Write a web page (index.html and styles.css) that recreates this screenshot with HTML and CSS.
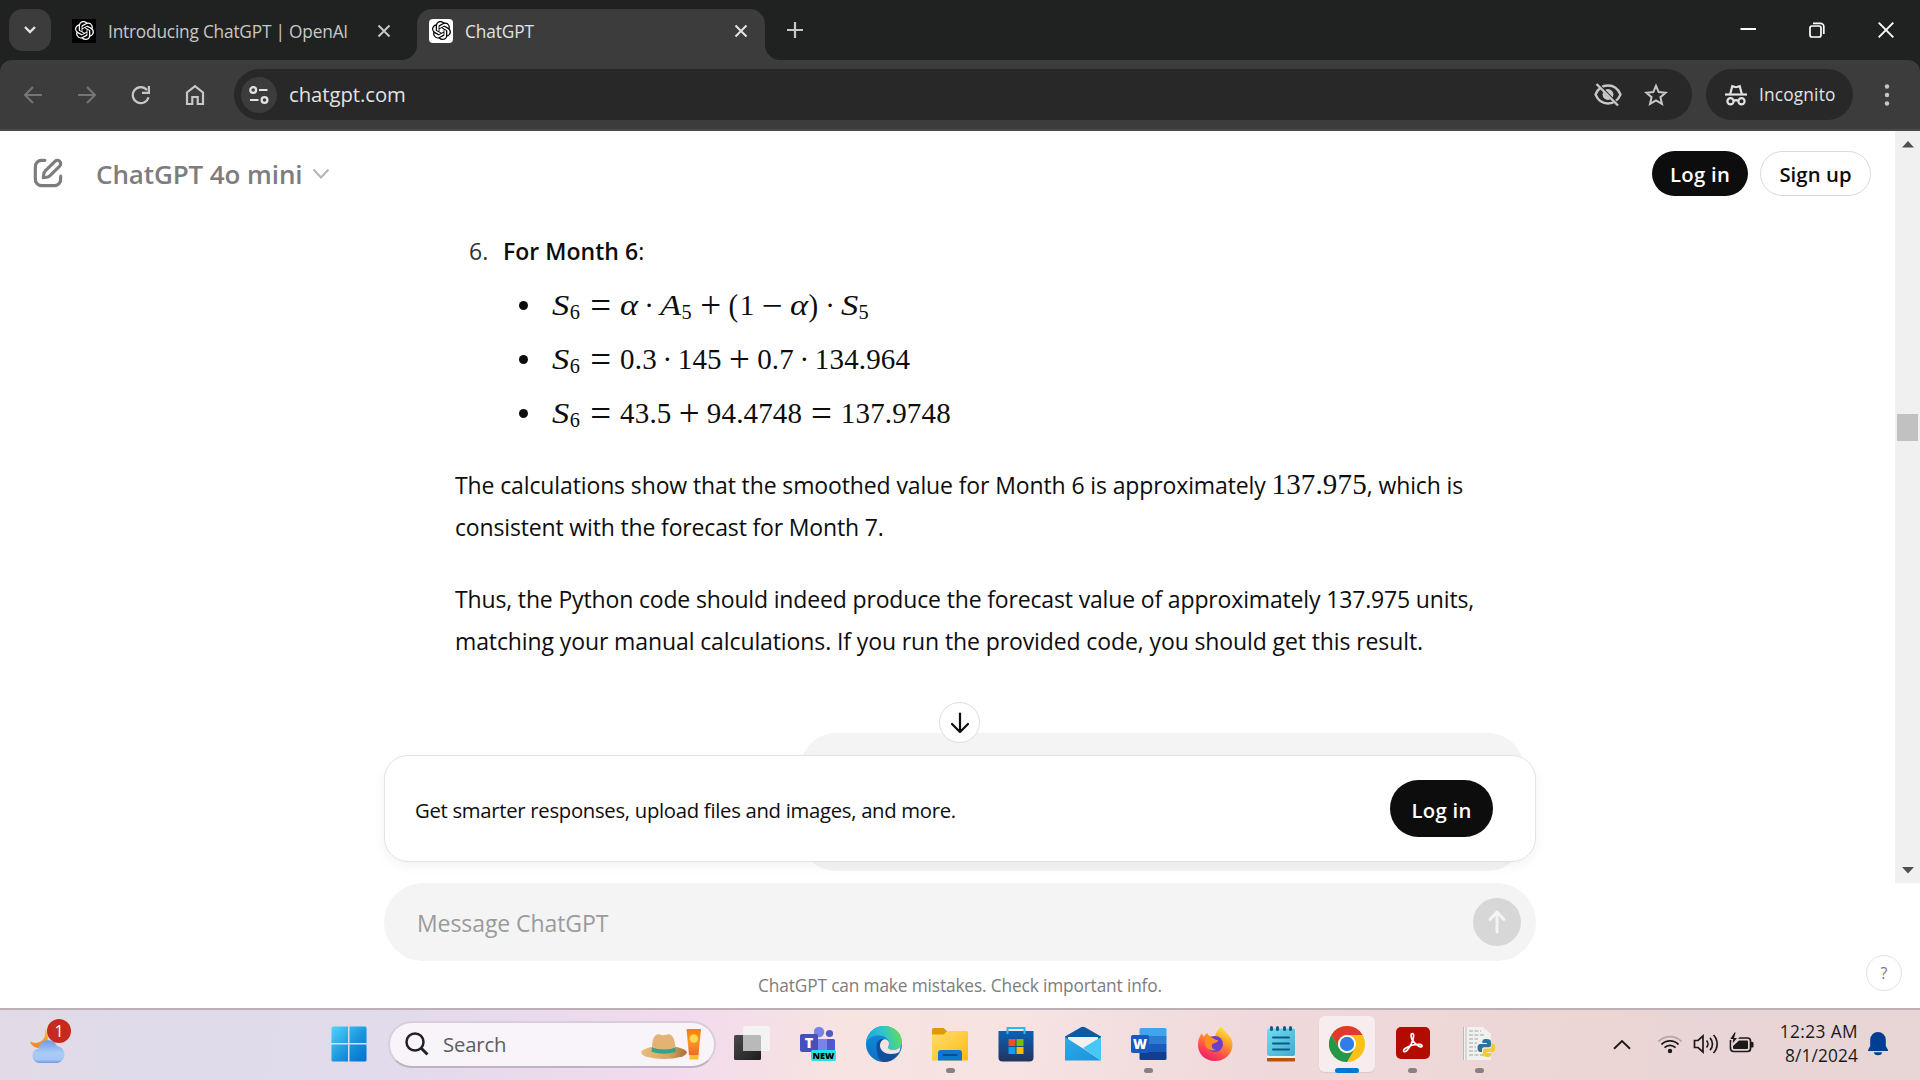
FILE: index.html
```html
<!DOCTYPE html>
<html lang="en">
<head>
<meta charset="utf-8">
<title>ChatGPT</title>
<link rel="stylesheet" href="styles.css">
</head>
<body>
<svg class="defs" width="0" height="0" aria-hidden="true">
  <defs>
    <symbol id="knot" viewBox="0 0 24 24"><path d="M22.2819 9.8211a5.9847 5.9847 0 0 0-.5157-4.9108 6.0462 6.0462 0 0 0-6.5098-2.9A6.0651 6.0651 0 0 0 4.9807 4.1818a5.9847 5.9847 0 0 0-3.9977 2.9 6.0462 6.0462 0 0 0 .7427 7.0966 5.98 5.98 0 0 0 .511 4.9107 6.051 6.051 0 0 0 6.5146 2.9001A5.9847 5.9847 0 0 0 13.2599 24a6.0557 6.0557 0 0 0 5.7718-4.2058 5.9894 5.9894 0 0 0 3.9977-2.9001 6.0557 6.0557 0 0 0-.7475-7.0729zm-9.022 12.6081a4.4755 4.4755 0 0 1-2.8764-1.0408l.1419-.0804 4.7783-2.7582a.7948.7948 0 0 0 .3927-.6813v-6.7369l2.02 1.1686a.071.071 0 0 1 .038.052v5.5826a4.504 4.504 0 0 1-4.4945 4.4944zm-9.6607-4.1254a4.4708 4.4708 0 0 1-.5346-3.0137l.142.0852 4.783 2.7582a.7712.7712 0 0 0 .7806 0l5.8428-3.3685v2.3324a.0804.0804 0 0 1-.0332.0615L9.74 19.9502a4.4992 4.4992 0 0 1-6.1408-1.6464zM2.3408 7.8956a4.485 4.485 0 0 1 2.3655-1.9728V11.6a.7664.7664 0 0 0 .3879.6765l5.8144 3.3543-2.0201 1.1685a.0757.0757 0 0 1-.071 0l-4.8303-2.7865A4.504 4.504 0 0 1 2.3408 7.872zm16.5963 3.8558L13.1038 8.364 15.1192 7.2a.0757.0757 0 0 1 .071 0l4.8303 2.7913a4.4944 4.4944 0 0 1-.6765 8.1042v-5.6772a.79.79 0 0 0-.407-.667zm2.0107-3.0231l-.142-.0852-4.7735-2.7818a.7759.7759 0 0 0-.7854 0L9.409 9.2297V6.8974a.0662.0662 0 0 1 .0284-.0615l4.8303-2.7866a4.4992 4.4992 0 0 1 6.6802 4.66zM8.3065 12.863l-2.02-1.1638a.0804.0804 0 0 1-.038-.0567V6.0742a4.4992 4.4992 0 0 1 7.3757-3.4537l-.142.0805L8.704 5.459a.7948.7948 0 0 0-.3927.6813zm1.0976-2.3654l2.602-1.4998 2.6069 1.4998v2.9994l-2.5974 1.4997-2.6067-1.4997Z"/></symbol>
    <linearGradient id="gWin" x1="0" y1="0" x2="1" y2="1"><stop offset="0" stop-color="#4fd5ff"/><stop offset=".55" stop-color="#1a94dd"/><stop offset="1" stop-color="#0070cc"/></linearGradient>
    <linearGradient id="gMoon" x1="0" y1="0" x2="0" y2="1"><stop offset="0" stop-color="#fbc53a"/><stop offset="1" stop-color="#ec8420"/></linearGradient>
    <linearGradient id="gCloud" x1="0" y1="0" x2="0" y2="1"><stop offset="0" stop-color="#6d9de6"/><stop offset=".55" stop-color="#a9cbf6"/><stop offset=".85" stop-color="#a5c6f5"/><stop offset="1" stop-color="#6f98e0"/></linearGradient>
    <linearGradient id="gHat" x1="0" y1="0" x2="1" y2="0"><stop offset="0" stop-color="#e9bd7d"/><stop offset=".6" stop-color="#d9a562"/><stop offset="1" stop-color="#a86f34"/></linearGradient>
    <linearGradient id="gTube" x1="0" y1="0" x2="0" y2="1"><stop offset="0" stop-color="#f57c12"/><stop offset=".5" stop-color="#fb9425"/><stop offset="1" stop-color="#ee6a2a"/></linearGradient>
    <linearGradient id="gDark" x1="0" y1="0" x2="1" y2="1"><stop offset="0" stop-color="#4a4a4a"/><stop offset="1" stop-color="#1d1d1d"/></linearGradient>
    <linearGradient id="gEdgeTop" x1="0" y1=".6" x2="1" y2=".4"><stop offset="0" stop-color="#1f9fe0"/><stop offset=".5" stop-color="#2fc3cf"/><stop offset="1" stop-color="#62dd55"/></linearGradient>
    <linearGradient id="gEdgeSide" x1="0" y1="0" x2="0" y2="1"><stop offset="0" stop-color="#1490e0"/><stop offset="1" stop-color="#0c6fc6"/></linearGradient>
    <linearGradient id="gFolder" x1="0" y1="0" x2="1" y2="1"><stop offset="0" stop-color="#ffdc6e"/><stop offset="1" stop-color="#fcbc14"/></linearGradient>
    <linearGradient id="gStore" x1="0" y1="0" x2="0" y2="1"><stop offset="0" stop-color="#0b62b4"/><stop offset="1" stop-color="#22335f"/></linearGradient>
    <linearGradient id="gMail" x1="0" y1="0" x2="1" y2="1"><stop offset="0" stop-color="#2fa9e8"/><stop offset="1" stop-color="#1a93dc"/></linearGradient>
    <linearGradient id="gFox" x1=".8" y1="0" x2=".3" y2="1"><stop offset="0" stop-color="#fff04a"/><stop offset=".4" stop-color="#ff9a26"/><stop offset=".75" stop-color="#ff4650"/><stop offset="1" stop-color="#ee1f6a"/></linearGradient>
    <linearGradient id="gNote" x1="0" y1="0" x2="1" y2="1"><stop offset="0" stop-color="#72dcf3"/><stop offset="1" stop-color="#41abd0"/></linearGradient>
  </defs>
</svg>

<div class="tabstrip">
  <div class="tab-search"><svg width="14" height="10" viewBox="0 0 14 10"><path d="M2 2l5 5 5-5" fill="none" stroke="#e3e3e3" stroke-width="2.4"/></svg></div>
  <div class="tab">
    <span class="favicon dark"><svg width="19" height="19"><use href="#knot"/></svg></span>
    <span class="tab-title long">Introducing ChatGPT | OpenAI</span>
    <svg class="tab-close" width="14" height="14" viewBox="0 0 14 14"><path d="M1.5 1.5l11 11M12.5 1.5l-11 11" stroke="#c7c7c7" stroke-width="2"/></svg>
  </div>
  <div class="tab active">
    <span class="favicon light"><svg width="19" height="19"><use href="#knot"/></svg></span>
    <span class="tab-title">ChatGPT</span>
    <svg class="tab-close" width="14" height="14" viewBox="0 0 14 14"><path d="M1.5 1.5l11 11M12.5 1.5l-11 11" stroke="#e3e3e3" stroke-width="2"/></svg>
  </div>
  <svg class="tab-new" width="16" height="16" viewBox="0 0 16 16"><path d="M8 0v16M0 8h16" stroke="#c7c7c7" stroke-width="2.2"/></svg>
  <div class="window-controls">
    <svg width="16" height="16" viewBox="0 0 16 16"><path d="M.5 7H16" stroke="#fff" stroke-width="2"/></svg>
    <svg width="16" height="16" viewBox="0 0 16 16"><g fill="none" stroke="#fff" stroke-width="1.7"><rect x="1" y="4" width="11" height="11" rx="2"/><path d="M4 1.3h7.500a3.300 3.300 0 0 1 3.300 3.300V12"/></g></svg>
    <svg width="16" height="16" viewBox="0 0 16 16"><path d="M.7.7l14.600 14.600M15.300.7L.7 15.300" stroke="#fff" stroke-width="1.9"/></svg>
  </div>
</div>

<div class="toolbar-back">
<div class="toolbar">
  <div class="nav">
    <svg width="20" height="20" viewBox="0 0 20 20"><path d="M19 10H2M10 2l-8 8 8 8" fill="none" stroke="#757575" stroke-width="2"/></svg>
    <svg width="20" height="20" viewBox="0 0 20 20"><path d="M1 10h17M10 2l8 8-8 8" fill="none" stroke="#757575" stroke-width="2"/></svg>
    <svg width="20" height="20" viewBox="0 0 20 20"><path d="M17.500 12.200A8 8 0 1 1 16 5" fill="none" stroke="#c7c7c7" stroke-width="2.2"/><path d="M19 1v8h-8V6.800h5.800V1z" fill="#c7c7c7"/></svg>
    <svg width="20" height="22" viewBox="0 0 20 22"><path d="M2 20V8.500L10 2.200l8 6.300V20h-5.300v-7H7.300v7z" fill="none" stroke="#c7c7c7" stroke-width="2.2"/></svg>
  </div>
  <div class="omnibox">
    <span class="site-info"><svg width="20" height="18" viewBox="0 0 20 18"><g fill="none" stroke="#e3e3e3" stroke-width="2.2"><circle cx="4.200" cy="4" r="2.900"/><path d="M10 4h8.500M1 14h8.500"/><circle cx="15.500" cy="14" r="2.900"/></g></svg></span>
    <span class="url">chatgpt.com</span>
    <svg class="eye" width="28" height="25" viewBox="0 0 28 25"><g fill="none" stroke="#c7c7c7" stroke-width="2.3"><path d="M1.500 12.500C3.800 7 8.500 3.500 14 3.500S24.200 7 26.500 12.500C24.200 18 19.500 21.500 14 21.500S3.800 18 1.500 12.500z"/></g><circle cx="14" cy="12.500" r="5.400" fill="#c7c7c7"/><path d="M0 3.800L22 26" stroke="#282828" stroke-width="3" transform="translate(2.500 -2.800)"/><path d="M2.500 2L24 23.500" stroke="#c7c7c7" stroke-width="2.4"/></svg>
    <svg width="24" height="23" viewBox="0 0 24 23"><path d="M12 2.800l2.700 6.300 6.900.6-5.200 4.500 1.600 6.700-6-3.600-6 3.600 1.600-6.700-5.200-4.500 6.900-.6z" fill="none" stroke="#c7c7c7" stroke-width="2"/></svg>
  </div>
  <div class="incognito">
    <svg width="22" height="22" viewBox="0 0 22 22"><g fill="none" stroke="#e3e3e3" stroke-width="2.2"><path d="M5.200 10L7.300 2.200l3.700 1 3.700-1L16.800 10"/><path d="M0 10.500h22"/><circle cx="5.500" cy="17.200" r="3.100"/><circle cx="16.500" cy="17.200" r="3.100"/><path d="M8.700 16.800q2.300-1.500 4.600 0"/></g></svg>
    <span>Incognito</span>
  </div>
  <svg class="kebab" width="6" height="22" viewBox="0 0 6 22"><g fill="#c7c7c7"><circle cx="3" cy="2.500" r="2.200"/><circle cx="3" cy="11" r="2.200"/><circle cx="3" cy="19.500" r="2.200"/></g></svg>
</div>
</div>

<main class="page">
  <div class="viewport">
    <div class="thread">
      <header class="app-header">
        <svg class="compose" width="38" height="38" viewBox="0 0 24 24" fill="#7d7d7d"><path fill-rule="evenodd" d="M15.673 3.913a3.121 3.121 0 1 1 4.414 4.414l-5.937 5.937a5 5 0 0 1-2.828 1.415l-2.180.311a1 1 0 0 1-1.132-1.130l.311-2.180A5 5 0 0 1 9.736 9.850zm3 1.414a1.120 1.120 0 0 0-1.586 0l-5.937 5.937a3 3 0 0 0-.849 1.697l-.123.860.860-.122a3 3 0 0 0 1.698-.849l5.937-5.937a1.120 1.120 0 0 0 0-1.586M11 4A1 1 0 0 1 10 5c-.998 0-1.702.008-2.253.060-.540.052-.862.141-1.109.267a3 3 0 0 0-1.311 1.311c-.134.263-.226.611-.276 1.216C5.001 8.471 5 9.264 5 10.400v3.200c0 1.137 0 1.929.051 2.546.050.605.142.953.276 1.216a3 3 0 0 0 1.311 1.311c.263.134.611.226 1.216.276.617.050 1.410.051 2.546.051h3.200c1.137 0 1.929 0 2.546-.051.605-.050.953-.142 1.216-.276a3 3 0 0 0 1.311-1.311c.126-.247.215-.569.266-1.108.053-.552.060-1.256.061-2.255a1 1 0 1 1 2 .002c0 .978-.006 1.780-.069 2.442-.064.673-.192 1.270-.475 1.827a5 5 0 0 1-2.185 2.185c-.592.302-1.232.428-1.961.487C15.600 21 14.727 21 13.643 21h-3.286c-1.084 0-1.958 0-2.666-.058-.728-.060-1.369-.185-1.960-.487a5 5 0 0 1-2.186-2.185c-.302-.592-.428-1.233-.487-1.961C3 15.600 3 14.727 3 13.643v-3.286c0-1.084 0-1.958.058-2.666.060-.729.185-1.369.487-1.961A5 5 0 0 1 5.730 3.545c.556-.284 1.154-.411 1.827-.475C8.220 3.007 9.021 3 9.999 3A1 1 0 0 1 11 4"/></svg>
        <h1>ChatGPT 4o mini</h1>
        <svg class="chev" width="18" height="12" viewBox="0 0 18 12"><path d="M1.5 1.5L9 9.500l7.500-8" fill="none" stroke="#b4b4b4" stroke-width="1.9"/></svg>
        <button class="btn dark">Log in</button>
        <button class="btn outline">Sign up</button>
      </header>

      <article>
        <div class="step"><span class="num">6.</span><b>For Month 6</b>:</div>
        <ul class="formulas">
          <li><span class="v s">S</span><span class="sub">6</span><span class="rel">=</span><span class="v al">α</span><span class="dot">·</span><span class="v a">A</span><span class="sub">5</span><span class="bin">+</span><span class="par">(</span>1<span class="bin">−</span><span class="v al">α</span><span class="par">)</span><span class="dot">·</span><span class="v s">S</span><span class="sub">5</span></li>
          <li><span class="v s">S</span><span class="sub">6</span><span class="rel">=</span>0.3<span class="dot">·</span>145<span class="bin">+</span>0.7<span class="dot">·</span>134.964</li>
          <li><span class="v s">S</span><span class="sub">6</span><span class="rel">=</span>43.5<span class="bin">+</span>94.4748<span class="rel">=</span>137.9748</li>
        </ul>
        <p><span class="loose">The calculations show that the smoothed value for Month 6 is approximately </span><span class="math">137.975</span><span class="loose">, which is</span><br>consistent with the forecast for Month 7.</p>
        <p>Thus, the Python code should indeed produce the forecast value of approximately 137.975 units,<br><span class="looser">matching your manual calculations. If you run the provided code, you should get this result.</span></p>
        <div class="user-bubble"></div>
      </article>
    </div>
    <div class="scrollbar">
      <svg width="12" height="7" viewBox="0 0 12 7"><path d="M6 0l6 6.500H0z" fill="#505050"/></svg>
      <span class="thumb"></span>
      <svg width="12" height="7" viewBox="0 0 12 7"><path d="M0 0h12L6 6.500z" fill="#505050"/></svg>
    </div>
    <div class="promo">
      <span>Get smarter responses, upload files and images, and more.</span>
      <button class="btn dark big">Log in</button>
    </div>
    <div class="to-bottom"><svg width="20" height="22" viewBox="0 0 20 22"><path d="M10 1.500v18M2 12l8 8 8-8" fill="none" stroke="#0d0d0d" stroke-width="2.2" stroke-linecap="round" stroke-linejoin="round"/></svg></div>
  </div>
  <div class="composer">
    <span>Message ChatGPT</span>
    <div class="send"><svg width="22" height="24" viewBox="0 0 22 24"><path d="M11 22V2M4 9.500L11 2l7 7.500" fill="none" stroke="#f4f4f4" stroke-width="3" stroke-linecap="round" stroke-linejoin="round"/></svg></div>
  </div>
  <div class="disclaimer">ChatGPT can make mistakes. Check important info.</div>
  <div class="help">?</div>
</main>

<footer class="taskbar">
  <div class="weather">
    <svg width="44" height="46" viewBox="0 0 44 46"><path d="M15.500 8C19 19 10 26 1 21.500c1.500 5 7 7.500 12 6 6-1.800 8.500-11 2.500-19.500z" fill="url(#gMoon)"/><path d="M10 43a8.500 7.500 0 0 1-.5-14.500C11 22 16 19.800 20 20.300c4 .4 7 3 8 5.700a8.600 8.600 0 0 1 .5 17z" fill="url(#gCloud)"/></svg>
    <span class="badge">1</span>
  </div>
  <svg class="start" width="36" height="36" viewBox="0 0 36 36"><path d="M2 .5h15v16.500H.5V2A1.500 1.500 0 0 1 2 .5zM18.500.5h15.500A1.500 1.500 0 0 1 35.500 2v15h-17zM.5 18.500h16.500v17H2A1.500 1.500 0 0 1 .5 34zM18.500 18.500h17V34a1.500 1.500 0 0 1-1.500 1.500h-15.500z" fill="url(#gWin)"/></svg>
  <div class="search">
    <svg width="24" height="24" viewBox="0 0 24 24"><circle cx="10" cy="10" r="8.500" fill="none" stroke="#222" stroke-width="2.5"/><path d="M16 16l6.500 6.500" stroke="#222" stroke-width="3"/></svg>
    <span>Search</span>
    <svg class="hat" width="62" height="34" viewBox="0 0 62 34"><ellipse cx="23" cy="25.500" rx="22.800" ry="6.500" fill="url(#gHat)"/><path d="M11 23c0-8 1-14 5-15.500 2-.7 4 .8 6.500.8s4.500-1.500 6.500-.8C33 9 34 15 35 23c-6 3.500-18 3.500-24 0z" fill="#e2b373"/><path d="M11 20.500c7 2.500 17 2.500 23.500 0l.5 4c-7 3-17 3-24.500 0z" fill="#2ea58c"/><path d="M45.500 2h14.500l-2.500 26h-9.500z" fill="url(#gTube)"/><rect x="48.500" y="28" width="9" height="4.500" fill="#f9bd2f"/><circle cx="52.800" cy="11.500" r="4.200" fill="#ffd84c"/></svg>
  </div>
  <nav class="apps">
    <div class="app"><svg width="36" height="36" viewBox="0 0 36 36"><rect x="0" y="9" width="27" height="25" rx="1.500" fill="url(#gDark)"/><rect x="9" y="0" width="27" height="25" rx="1.500" fill="#f3f3f3"/><path d="M9 10.500a1.500 1.500 0 0 1 0-1.500h16.500A1.500 1.500 0 0 1 27 10.500V25H9z" fill="#b9b9b9"/></svg></div>
    <div class="app"><svg width="38" height="36" viewBox="0 0 38 36"><circle cx="20" cy="6" r="5.200" fill="#7b83eb"/><circle cx="30.500" cy="7.500" r="3.600" fill="#5059c9"/><path d="M17 13h12v16H17z" fill="#7b83eb"/><path d="M28 13h6.500a1.500 1.500 0 0 1 1.500 1.500V24h-8z" fill="#5059c9"/><rect x="1" y="8" width="18" height="18" rx="2" fill="#4650bd"/><text x="10" y="22" text-anchor="middle" class="glyph" font-size="14.500" fill="#fff">T</text><rect x="12" y="24" width="25" height="11" rx="2" fill="#23e3e3"/><text x="24.500" y="32.800" text-anchor="middle" class="glyph" font-size="9" fill="#000">NEW</text></svg></div>
    <div class="app"><svg width="36" height="36" viewBox="0 0 36 36"><circle cx="18" cy="18" r="18" fill="url(#gEdgeSide)"/><path d="M0 17C1 7 8 0 18 0c10 0 18 7 18 15.500 0 5.500-4 8.500-8.500 8.500-3.500 0-5.500-1-5.500-2.500 0-1 1-1.500 1-4C23 13 18.500 9.500 13 9.500 6.500 9.500 2 12 0 17z" fill="url(#gEdgeTop)"/><path d="M10.500 20c0-4.500 3-7 6.500-7 1.500 0 1 0 1.500.3C15.500 14.500 14 17 14 19.500c0 5 5 8.500 11 8.500 4 0 6.500-1 8.200-2C30 32 24.500 36 18.500 36c-5 0-8-7-8-16z" fill="#0f4f9c"/><path d="M23 17.500c0 2.500-1 3-1 4 0 1.500 2 2.500 5.500 2.500 3 0 5.500-1.300 7-3.500-.3 2.500-.8 4-1.300 5.500C31.500 27 29 28 25 28c-6 0-11-3.500-11-8.500 0-3 1.800-5.500 4.500-6.200 2.700-.5 4.500 2 4.500 4.200z" fill="#f5e3e3"/></svg></div>
    <div class="app run"><svg width="36" height="36" viewBox="0 0 36 36"><path d="M1.500 2h10l4 3.500-4 3.500H0V3.500A1.500 1.500 0 0 1 1.500 2z" fill="#dd9c07"/><path d="M0 8.500h11.500l4-3.500H34.500A1.500 1.500 0 0 1 36 6.500V34.500H0z" fill="url(#gFolder)"/><path d="M6 34.500V27a3 3 0 0 1 3-3h18a3 3 0 0 1 3 3v7.500z" fill="#0e76cc"/><path d="M11.500 29h13" stroke="#0a4a94" stroke-width="2" stroke-linecap="round"/></svg></div>
    <div class="app"><svg width="36" height="36" viewBox="0 0 36 36"><path d="M.5 5H35.500V31.500a4 4 0 0 1-4 4h-27a4 4 0 0 1-4-4z" fill="url(#gStore)"/><path d="M9.500 8V2h17v6" fill="none" stroke="#2bb8f0" stroke-width="2"/><path d="M10.500 13h7v7h-7z" fill="#f25022"/><path d="M18.500 13h7v7h-7z" fill="#7fba00"/><path d="M10.500 21h7v7h-7z" fill="#00a4ef"/><path d="M18.500 21h7v7h-7z" fill="#ffb900"/></svg></div>
    <div class="app"><svg width="36" height="36" viewBox="0 0 36 36"><path d="M0 10.500L16 1.200q2-1.100 4 0L36 10.500V20H0z" fill="#0c59a4"/><path d="M3 11h30v12H3z" fill="#f2f1f0"/><path d="M0 11l18 11.500L36 34.500H0z" fill="url(#gMail)"/><path d="M36 11v23.500L18 22z" fill="#45c8f3"/></svg></div>
    <div class="app run"><svg width="36" height="36" viewBox="0 0 36 36"><path d="M8.500 10V3.500A1.500 1.500 0 0 1 10 2h24a1.500 1.500 0 0 1 1.500 1.500V10z" fill="#41a5ee"/><path d="M8.500 10h27v8h-27z" fill="#2b7cd3"/><path d="M8.500 18h27v8h-27z" fill="#185abd"/><path d="M8.500 26h27v6.500A1.500 1.500 0 0 1 34 34H10a1.500 1.500 0 0 1-1.500-1.500z" fill="#103f91"/><rect x="0" y="9" width="18" height="18" rx="1.800" fill="#185abd"/><text x="9" y="23" text-anchor="middle" class="glyph" font-size="13.500" fill="#fff">W</text></svg></div>
    <div class="app"><svg width="36" height="36" viewBox="0 0 36 36"><path d="M18 35C8 35 1 28 1 19c0-5 1.500-9 4-12 .3 1.800 1 2.800 2 3.600 1-1.800 2-2.800 3.500-3.800 0 2 1 3 3.500 3.500h4c1-4 3-7.500 7-10 0 5 10.500 8 10.500 18C35.500 28 28 35 18 35z" fill="url(#gFox)"/><circle cx="18" cy="18" r="8" fill="#6a3fd0"/><path d="M8 11c4-1 8 .3 10 2.500 1.500.2 3 .5 3 1.500-1.500 2.500-5 1.500-6 4-1 2 1 4.500 4 5-6 1.500-11-2-11-7z" fill="#ff8f22"/></svg></div>
    <div class="app"><svg width="36" height="36" viewBox="0 0 36 36"><rect x="4" y="31" width="28" height="4.500" rx="1" fill="#b3560f"/><path d="M4 29h28v3H4z" fill="#f1f1f1"/><rect x="4" y="2.500" width="28" height="27.500" rx="2" fill="url(#gNote)"/><g stroke="#0b5c80" stroke-width="2" stroke-linecap="round"><path d="M10 11.500h16M10 17.500h16M10 23.500h16"/></g><g fill="#0b5c80"><rect x="7" y="0" width="3" height="5" rx="1.500"/><rect x="13" y="0" width="3" height="5" rx="1.500"/><rect x="20" y="0" width="3" height="5" rx="1.500"/><rect x="26" y="0" width="3" height="5" rx="1.500"/></g></svg></div>
    <div class="app run current"><svg width="36" height="36" viewBox="0 0 36 36"><circle cx="18" cy="18" r="18" fill="#fbc116"/><path d="M2.400 9A18 18 0 0 1 33.600 9H18a9 9 0 0 0-7.800 13.500z" fill="#df3a2e"/><path d="M2.400 9L10.200 22.500A9 9 0 0 0 25.800 22.500L18 36A18 18 0 0 1 2.400 9z" fill="#23974a"/><circle cx="18" cy="18" r="9" fill="#fff"/><circle cx="18" cy="18" r="7.200" fill="#2f7de9"/></svg></div>
    <div class="app run"><svg width="36" height="36" viewBox="0 0 36 36"><rect x="1" y="1" width="34" height="32" rx="5" fill="#b30b00"/><path d="M9 25.500c-2-1.500 3-5 9-6.500 5-1.200 9.500-.8 9 1.200-.6 2-6-1-9-5.200-2.500-3.500-2.500-7.500-.6-7.500 2.300 0 1.100 6-1.400 11-2.500 4.600-5.300 8.200-7 7z" fill="none" stroke="#fff" stroke-width="1.7"/></svg></div>
    <div class="app run"><svg width="36" height="36" viewBox="0 0 36 36"><path d="M2 1h20l8 7v26H3z" fill="#f1f1ef"/><path d="M2.500 1v33M5 1v33" stroke="#b9b9b9" stroke-width="1"/><path d="M8 5h12M8 9h16M8 13h9M8 17h8M8 21h7M8 25h8M8 29h16" stroke="#bdbdbd" stroke-width="1.4" stroke-dasharray="4 1.500"/><path d="M25.500 13c-4 0-4.200 1.500-4.200 4h4.500v1h-6.500c-2 0-2.800 2-2.800 4s.8 4 2.800 4h1.700v-2.500c0-1.500 1-2.300 2.500-2.300h4.500c1.300 0 2-1 2-2V16c0-2-1.500-3-4.500-3z" fill="#33709f"/><path d="M26.200 31c4 0 4.200-1.500 4.200-4h-4.500v-1h5.600c2 0 2.800-2 2.800-4.300s-.8-4.200-2.800-4.200h-1.100v2.700c0 1.500-1 2.300-2.500 2.300h-4c-1.300 0-2 1-2 2V28c0 2 1.300 3 4.300 3z" fill="#f7c93a"/></svg></div>
  </nav>
  <div class="tray">
    <svg width="18" height="11" viewBox="0 0 18 11"><path d="M1 9.800L9 2l8 7.800" fill="none" stroke="#1a1a1a" stroke-width="1.9"/></svg>
    <svg class="wifi" width="26" height="20" viewBox="0 0 26 20"><g fill="none" stroke="#1a1a1a" stroke-width="1.8"><path d="M1.500 7.500a16 16 0 0 1 23 0" stroke="#b5a6a8"/><path d="M4.500 10.500a12 12 0 0 1 17 0M7.500 13.700a7.800 7.800 0 0 1 11 0"/></g><circle cx="13" cy="17" r="2.200" fill="#1a1a1a"/></svg>
    <svg class="vol" width="26" height="20" viewBox="0 0 26 20"><g fill="none" stroke="#1a1a1a" stroke-width="1.7"><path d="M1.500 6.500H5l5-4.500v16l-5-4.500H1.500z"/><path d="M13.500 6.500a5 5 0 0 1 0 7M17 3.800a9 9 0 0 1 0 12.400M20.500 1a13 13 0 0 1 0 18"/></g></svg>
    <svg class="bat" width="26" height="22" viewBox="0 0 26 22"><rect x="1.500" y="6" width="20" height="13.500" rx="3" fill="none" stroke="#1a1a1a" stroke-width="1.7"/><path d="M10 8.500h8a1 1 0 0 1 1 1v6.500a1 1 0 0 1-1 1H5a1 1 0 0 1-1-1V14z" fill="#1a1a1a"/><path d="M22 10h1.500a1 1 0 0 1 1 1v3.500a1 1 0 0 1-1 1H22z" fill="#1a1a1a"/><path d="M5.200 0L.3 7.500H3.500L2.800 13.500 9.300 5.500H5.800L7.500 0z" fill="#1a1a1a" stroke="#e8d5d6" stroke-width="1.2"/></svg>
    <div class="clock"><span class="time">12:23 AM</span><span>8/1/2024</span></div>
    <svg class="bell" width="20" height="24" viewBox="0 0 20 24"><path d="M10 0a7.800 7.800 0 0 1 7.800 7.800V14l2.200 4v1H0v-1l2.200-4V7.800A7.800 7.800 0 0 1 10 0zM6 20.300h8a4 3 0 0 1-8 0z" fill="#003e92"/></svg>
  </div>
</footer>
</body>
</html>
```
FILE: styles.css
```css
* { box-sizing: border-box; }
body {
  margin: 0;
  width: 1920px;
  height: 1080px;
  overflow: hidden;
  display: flex;
  flex-direction: column;
  background: #fff;
  color: #0d0d0d;
  font-family: "Open Sans", "Noto Sans", sans-serif;
  font-size: 23px;
}
svg { display: block; flex: none; }
.defs { position: absolute; }
button { font-family: inherit; margin: 0; padding: 0; }

/* Tab strip */
.tabstrip {
  height: 60px;
  flex: none;
  display: flex;
  background: #202221;
  padding-left: 9px;
}
.tab-search {
  width: 42px;
  height: 42px;
  margin-top: 9px;
  border-radius: 14px;
  background: #3c3c3c;
  display: flex;
  align-items: center;
  justify-content: center;
}
.tab {
  width: 350px;
  height: 51px;
  margin-top: 9px;
  padding: 0 0 8px 21px;
  display: flex;
  align-items: center;
  color: #c7c7c7;
  font-size: 17.3px;
}
.tab-title { margin-left: 12px; white-space: nowrap; padding-top: 2px; letter-spacing: -.1px; }
.tab-title.long { letter-spacing: -.2px; }
.tab-close { margin-left: auto; margin-right: 10px; }
.tab.active {
  position: relative;
  width: 348px;
  margin-left: 16px;
  padding-left: 12px;
  background: #3c3c3c;
  border-radius: 15px 15px 0 0;
  color: #e3e3e3;
}
.tab.active .tab-close { margin-right: 17px; }
.tab.active::before, .tab.active::after {
  content: "";
  position: absolute;
  bottom: 0;
  width: 15px;
  height: 15px;
}
.tab.active::before { left: -15px; background: radial-gradient(circle at 0 0, transparent 14.5px, #3c3c3c 15.5px); }
.tab.active::after { right: -15px; background: radial-gradient(circle at 100% 0, transparent 14.5px, #3c3c3c 15.5px); }
.favicon {
  width: 24px;
  height: 24px;
  display: flex;
  align-items: center;
  justify-content: center;
}
.favicon.dark { background: #000; fill: #fff; }
.favicon.light { background: #fff; fill: #000; border-radius: 4px; }
.tab-new { margin: 22px 0 0 22px; }
.window-controls {
  margin-left: auto;
  padding: 22px 26px 0 0;
  display: flex;
  gap: 53px;
}

/* Toolbar */
.toolbar-back { flex: none; background: #202221; }
.toolbar {
  height: 71px;
  background: #3c3c3c;
  border-bottom: 2px solid #494949;
  border-radius: 12px 12px 0 0;
  display: flex;
  align-items: center;
}
.nav { width: 234px; padding-left: 23px; display: flex; align-items: center; gap: 34px; }
.omnibox {
  width: 1458px;
  height: 51px;
  border-radius: 26px;
  background: #282828;
  display: flex;
  align-items: center;
  padding: 0 24px 0 7px;
}
.site-info {
  width: 36px;
  height: 36px;
  border-radius: 50%;
  background: #3c3c3c;
  display: flex;
  align-items: center;
  justify-content: center;
}
.url { margin-left: 12px; padding-bottom: 2px; font-size: 20.3px; color: #e3e3e3; letter-spacing: -.05px; }
.eye { margin-left: auto; margin-right: 22px; }
.incognito {
  width: 147px;
  height: 51px;
  margin-left: 14px;
  border-radius: 26px;
  background: #282828;
  display: flex;
  align-items: center;
  gap: 12px;
  padding-left: 19px;
  color: #e3e3e3;
  font-size: 17.3px;
  letter-spacing: .17px;
}
.kebab { margin-left: 31px; }

/* Page */
.page { flex: 1; display: flex; flex-direction: column; align-items: center; position: relative; }
.viewport { width: 100%; height: 752px; flex: none; display: flex; position: relative; }
.thread { flex: 1; height: 752px; }
.app-header { height: 85px; display: flex; align-items: center; padding: 0 24px 0 29px; }
.compose { margin-top: -2px; }
.app-header h1 { margin: 1px 0 0 29px; font-size: 26px; font-weight: 600; color: #7d7d7d; letter-spacing: -.1px; line-height: 40px; }
.chev { margin: 1px auto 0 10px; }
.btn {
  height: 45px;
  border-radius: 30px;
  font-size: 20.3px;
  font-weight: 600;
  line-height: 1;
}
.btn.dark { width: 96px; background: #0d0d0d; color: #fff; border: 0; padding-top: 1px; letter-spacing: .28px; }
.btn.outline { width: 111px; margin-left: 12px; padding-top: 1px; background: #fff; color: #0d0d0d; border: 1px solid #d9d9d9; letter-spacing: .07px; }
.btn.big { width: 103px; height: 57px; padding-top: 3px; }

article { padding: 14px 371px 0 455px; line-height: 42px; letter-spacing: -.155px; }
.step { display: flex; padding-left: 14px; height: 42px; letter-spacing: .03px; }
.step b { font-weight: 600; }
.num { width: 34px; color: #333; }
.formulas {
  margin: 12px 0 1px;
  padding: 0 0 0 97px;
  list-style: none;
  display: flex;
  flex-direction: column;
  gap: 12px;
}
.formulas li {
  position: relative;
  height: 42px;
  white-space: nowrap;
  font: 29px/42px "Liberation Serif", serif;
  letter-spacing: .15px;
}
.formulas li::before {
  content: "";
  position: absolute;
  left: -33px;
  top: 17px;
  width: 9px;
  height: 9px;
  border-radius: 50%;
  background: #0d0d0d;
}
.formulas span { display: inline-block; line-height: 1; letter-spacing: 0; }
.v { font-style: italic; font-size: 30px; transform-origin: 0 50%; }
.s { width: 17.8px; transform: scaleX(1.15); }
.a { width: 21.8px; transform: scaleX(1.15); }
.al { width: 18.6px; transform: scaleX(1.15); }
.sub { width: 11.6px; font-size: 20.3px; transform: translateY(3.5px); }
.rel, .bin, .dot { text-align: center; }
.rel, .bin { font-size: 37px; height: 0; transform: translateY(2.5px); }
.formulas .rel, .formulas .bin { line-height: 0; }
.rel { width: 38.7px; }
.bin { width: 35.4px; }
.dot { width: 21px; }
.par { width: 11.3px; transform: scaleY(1.1); }
article p { margin: 30px 0 0; height: 84px; white-space: nowrap; }
.math { font: 29px/1 "Liberation Serif", serif; letter-spacing: .15px; }
.loose { letter-spacing: -.12px; }
.looser { letter-spacing: -.107px; }
.user-bubble { margin: 71px 0 0 345px; height: 138px; border-radius: 36px; background: #f4f4f4; }

.scrollbar {
  width: 25px;
  background: #f0f0f0;
  display: flex;
  flex-direction: column;
  align-items: center;
  padding: 10px 0 9px;
}
.thumb { width: 21px; height: 27px; margin: 266px 0 auto; background: #c1c1c1; }

.promo {
  position: absolute;
  left: 384px;
  bottom: 21px;
  width: 1152px;
  height: 107px;
  padding: 0 42px 0 30px;
  display: flex;
  align-items: center;
  justify-content: space-between;
  background: #fff;
  border: 1px solid #e3e3e3;
  border-radius: 24px;
  box-shadow: 0 4px 12px rgba(0, 0, 0, .05);
  font-size: 20.3px;
  letter-spacing: -.29px;
}
.promo span { padding-top: 2px; }
.to-bottom {
  position: absolute;
  left: 939px;
  top: 571px;
  width: 41px;
  height: 41px;
  border-radius: 50%;
  background: #fff;
  border: 1px solid #dedede;
  display: flex;
  align-items: center;
  justify-content: center;
}
.composer {
  width: 1152px;
  height: 78px;
  flex: none;
  border-radius: 39px;
  background: #f4f4f4;
  display: flex;
  align-items: center;
  justify-content: space-between;
  padding: 0 15px 0 33px;
  color: #9b9b9b;
  letter-spacing: -.08px;
}
.composer > span { padding-top: 2px; }
.send {
  width: 48px;
  height: 48px;
  border-radius: 50%;
  background: #d7d7d7;
  display: flex;
  align-items: center;
  justify-content: center;
}
.disclaimer { margin-top: 13px; font-size: 17.3px; line-height: 24px; letter-spacing: -.14px; color: #7d7d7d; }
.help {
  position: absolute;
  right: 18px;
  bottom: 17px;
  width: 36px;
  height: 36px;
  border-radius: 50%;
  border: 1px solid #e0e0e0;
  color: #7d7d7d;
  font-size: 16px;
  line-height: 35px;
  text-align: center;
}

/* Taskbar */
.taskbar {
  height: 72px;
  flex: none;
  border-top: 2px solid #bcb0b6;
  background: linear-gradient(100deg, #e2dae6 0, #dfdbea 8%, #e1dbeb 20%, #f2daee 35%, #f7e4e1 44%, #f6e3e2 53%, #efd9dc 65%, #ecd6d3 83%, #e9d5d7 88%, #e8d5d6 100%);
  display: flex;
  align-items: center;
}
.weather { position: relative; width: 331px; padding-left: 29px; margin-top: -5px; }
.badge {
  position: absolute;
  left: 47px;
  top: -1px;
  width: 24px;
  height: 24px;
  border-radius: 50%;
  background: #c42b1c;
  color: #fff;
  font-size: 16px;
  line-height: 24px;
  text-align: center;
}
.search {
  width: 328px;
  height: 47px;
  margin: -2px 0 0 21px;
  border-radius: 24px;
  background: #f8f4fa;
  border: 2px solid #d8cddd;
  border-bottom-color: #bdb2c2;
  display: flex;
  align-items: center;
  padding: 0 11px 0 15px;
  color: #5c5b5f;
  font-size: 20.3px;
  letter-spacing: -.15px;
}
.search span { margin-left: 14px; }
.hat { margin-left: auto; }
.start { margin-top: -2px; }
.apps { display: flex; padding-left: 3px; }
.app {
  position: relative;
  width: 66.1px;
  height: 56px;
  margin-top: -2px;
  display: flex;
  align-items: center;
  justify-content: center;
}
.app svg { position: relative; }
.app.run::after {
  content: "";
  position: absolute;
  left: 50%;
  bottom: -1px;
  width: 9px;
  height: 5px;
  margin-left: -4.5px;
  border-radius: 3px;
  background: #8a8083;
}
.app.current::before {
  content: "";
  position: absolute;
  left: 5px;
  top: 0;
  width: 56px;
  height: 56px;
  border-radius: 6px;
  background: #f8edee;
  box-shadow: 0 1px 1px #d9c8ca;
}
.app.current::after { width: 24px; margin-left: -12px; background: #0078d4; }
.glyph { font-family: "Open Sans", sans-serif; font-weight: 800; }
.tray { margin: -2px 0 0 auto; display: flex; align-items: center; padding-right: 32px; }
.wifi { margin-left: 26px; }
.vol { margin-left: 10px; }
.bat { margin-left: 10px; margin-top: -3px; }
.clock {
  display: flex;
  flex-direction: column;
  align-items: flex-end;
  width: 103px;
  font-size: 17.3px;
  line-height: 24px;
  letter-spacing: .13px;
  color: #1a1a1a;
}
.time { letter-spacing: .4px; }
.bell { margin-left: 10px; }
```
